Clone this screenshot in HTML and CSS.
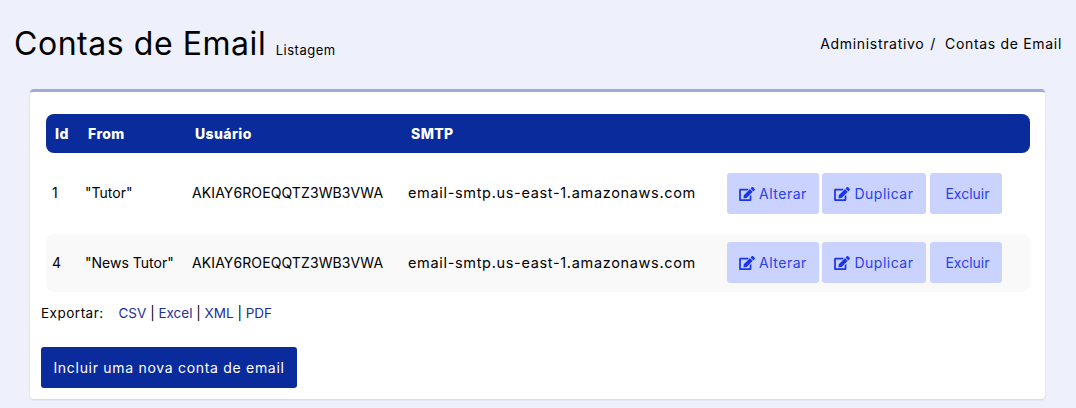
FILE: index.html
```html
<!DOCTYPE html>
<html lang="pt-BR">
<head>
    <meta charset="UTF-8">
    <title>Contas de Email</title>
    <link rel="stylesheet" href="styles.css">
</head>
<body>

    <!-- Edit icon, reused by the row buttons -->
    <svg class="icon-defs" aria-hidden="true">
        <symbol id="icon-edit" viewBox="0 0 576 512">
            <path d="M402.6 83.2l90.2 90.2c3.8 3.8 3.8 10 0 13.8L274.4 405.6l-92.8 10.3c-12.4 1.4-22.9-9.1-21.5-21.5l10.3-92.8L388.8 83.2c3.8-3.8 10-3.8 13.8 0zm162-22.9l-48.8-48.8c-15.2-15.2-39.9-15.2-55.2 0l-35.4 35.4c-3.8 3.8-3.8 10 0 13.8l90.2 90.2c3.8 3.8 10 3.8 13.8 0l35.4-35.4c15.2-15.3 15.2-40 0-55.2zM384 346.2V448H64V128h229.8c3.2 0 6.2-1.3 8.5-3.5l40-40c7.6-7.6 2.2-20.5-8.5-20.5H48C21.5 64 0 85.5 0 112v352c0 26.5 21.5 48 48 48h352c26.5 0 48-21.5 48-48V306.2c0-10.7-12.9-16-20.5-8.5l-40 40c-2.2 2.3-3.5 5.3-3.5 8.5z"/>
        </symbol>
    </svg>

    <!-- Page title and breadcrumb -->
    <div class="page-header">
        <h1>Contas de Email <small>Listagem</small></h1>
        <div class="breadcrumb">
            <a href="#">Administrativo</a>
            <span class="sep">/</span>
            <span>Contas de Email</span>
        </div>
    </div>

    <div class="card">
        <table class="grid">
            <colgroup>
                <col class="col-id">
                <col class="col-from">
                <col class="col-user">
                <col class="col-smtp">
                <col>
            </colgroup>
            <thead>
                <tr>
                    <th>Id</th>
                    <th>From</th>
                    <th>Usuário</th>
                    <th>SMTP</th>
                    <th></th>
                </tr>
            </thead>
            <tbody>
                <tr>
                    <td>1</td>
                    <td>"Tutor"</td>
                    <td class="key">AKIAY6ROEQQTZ3WB3VWA</td>
                    <td class="host">email-smtp.us-east-1.amazonaws.com</td>
                    <td class="actions">
                        <a class="btn btn-edit" href="#"><svg class="icon"><use href="#icon-edit"></use></svg>Alterar</a>
                        <a class="btn btn-dup" href="#"><svg class="icon"><use href="#icon-edit"></use></svg>Duplicar</a>
                        <a class="btn btn-del" href="#">Excluir</a>
                    </td>
                </tr>
                <tr class="alt">
                    <td>4</td>
                    <td>"News Tutor"</td>
                    <td class="key">AKIAY6ROEQQTZ3WB3VWA</td>
                    <td class="host">email-smtp.us-east-1.amazonaws.com</td>
                    <td class="actions">
                        <a class="btn btn-edit" href="#"><svg class="icon"><use href="#icon-edit"></use></svg>Alterar</a>
                        <a class="btn btn-dup" href="#"><svg class="icon"><use href="#icon-edit"></use></svg>Duplicar</a>
                        <a class="btn btn-del" href="#">Excluir</a>
                    </td>
                </tr>
            </tbody>
        </table>

        <!-- Export links -->
        <div class="export">
            <span class="export-label">Exportar:</span>
            <a href="#">CSV</a> | <a href="#">Excel</a> | <a href="#">XML</a> | <a href="#">PDF</a>
        </div>

        <a class="btn-new" href="#">Incluir uma nova conta de email</a>
    </div>

</body>
</html>
```

FILE: styles.css
```css
body {
    font-family: Inter, "Noto Sans", sans-serif;
    font-size: 14px;
    background-color: #eef0fb;
    color: #000;
    margin: 0;
    height: 408px;
    overflow: hidden;
}
a {
    text-decoration: none;
}
.icon-defs {
    display: none;
}
.page-header {
    display: flex;
    justify-content: space-between;
    padding: 23px 14px 0 14px;
    height: 66px;
}
.page-header h1 {
    font-size: 32px;
    font-weight: 400;
    letter-spacing: 0.55px;
    line-height: 42px;
    margin: 0;
}
.page-header small {
    font-size: 13px;
    letter-spacing: 0.5px;
}
.breadcrumb {
    display: flex;
    font-size: 14px;
    letter-spacing: 0.68px;
    line-height: 42px;
}
.breadcrumb a {
    color: #000;
}
.breadcrumb .sep {
    margin: 0 9px 0 6px;
}
.card {
    background-color: #fff;
    border-top: 3px solid #a0acd8;
    border-radius: 4px;
    box-shadow: 0 1px 2px rgba(0, 0, 0, 0.12);
    margin: 0 31px 0 30px;
    padding: 22px 15px 11px 11px;
    height: 274px;
}
.grid {
    border-collapse: collapse;
    table-layout: fixed;
    width: 984px;
    margin-left: 5px;
}
.col-id { width: 33px; }
.col-from { width: 107px; }
.col-user { width: 216px; }
.col-smtp { width: 319px; }
.grid th {
    background-color: #0a2b9c;
    color: #fff;
    font-size: 14px;
    font-weight: 800;
    letter-spacing: 0.4px;
    text-align: left;
    height: 39px;
    padding: 0 0 0 9px;
}
.grid th:first-child {
    border-radius: 8px 0 0 8px;
}
.grid th:last-child {
    border-radius: 0 8px 8px 0;
}
.grid td {
    box-sizing: border-box;
    height: 58px;
    padding: 0 0 2px 6px;
    white-space: nowrap;
}
.grid tbody tr:first-child td {
    height: 81px;
}
.grid td.actions {
    padding-bottom: 0;
}
.grid .alt td.actions {
    padding-bottom: 1px;
}
.grid .key {
    letter-spacing: 0.1px;
}
.grid .host {
    font-size: 14.5px;
    letter-spacing: 0.67px;
}
.grid .alt td {
    background-color: #f9f9f9;
}
.grid .alt td:first-child {
    border-radius: 8px 0 0 8px;
}
.grid .alt td:last-child {
    border-radius: 0 8px 8px 0;
}
.actions {
    font-size: 0;
}
.btn {
    display: inline-flex;
    align-items: center;
    justify-content: center;
    vertical-align: middle;
    gap: 4px;
    height: 41px;
    background-color: #cad2fe;
    color: #2a41f0;
    font-size: 14px;
    letter-spacing: 0.5px;
    border-radius: 3px;
    margin-right: 3px;
}
.btn-edit { width: 92px; }
.btn-dup { width: 104px; }
.btn-del {
    width: 72px;
    margin-left: 1px;
    padding-left: 3px;
    box-sizing: border-box;
    letter-spacing: 0;
}
.icon {
    width: 16px;
    height: 14px;
    fill: #1a35f0;
}
.export {
    margin-top: 10px;
    line-height: 22px;
    font-size: 13.5px;
}
.export-label {
    letter-spacing: 0.5px;
    margin-right: 11px;
}
.export a {
    color: #1c2f9e;
}
.btn-new {
    display: inline-flex;
    align-items: center;
    justify-content: center;
    box-sizing: border-box;
    width: 256px;
    height: 41px;
    margin-top: 23px;
    padding-bottom: 1px;
    background-color: #0a2b9c;
    color: #fff;
    font-size: 14px;
    letter-spacing: 0.7px;
    border-radius: 3px;
}
```
